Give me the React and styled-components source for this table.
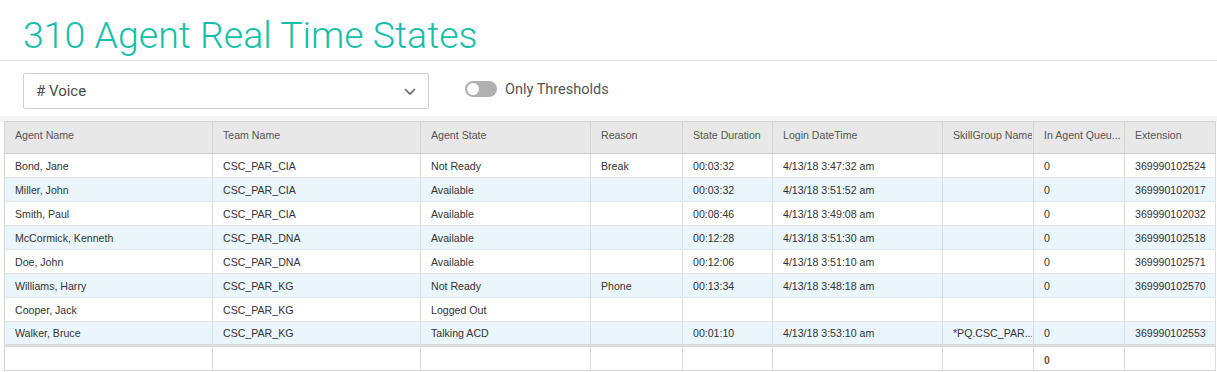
import React, { useState } from 'react';
import styled, { createGlobalStyle } from 'styled-components';

const GlobalStyle = createGlobalStyle`
  html, body { margin: 0; padding: 0; background: #fff; }
  body { font-family: "Liberation Sans", Arial, sans-serif; }
`;

const columns = [
  { key: 'name', label: 'Agent Name', width: 208 },
  { key: 'team', label: 'Team Name', width: 208 },
  { key: 'state', label: 'Agent State', width: 170 },
  { key: 'reason', label: 'Reason', width: 92 },
  { key: 'duration', label: 'State Duration', width: 90 },
  { key: 'login', label: 'Login DateTime', width: 170 },
  { key: 'skill', label: 'SkillGroup Name', width: 91 },
  { key: 'queue', label: 'In Agent Queu...', width: 91 },
  { key: 'ext', label: 'Extension', width: 91 },
];

const rows = [
  { name: 'Bond, Jane', team: 'CSC_PAR_CIA', state: 'Not Ready', reason: 'Break', duration: '00:03:32', login: '4/13/18 3:47:32 am', skill: '', queue: '0', ext: '369990102524' },
  { name: 'Miller, John', team: 'CSC_PAR_CIA', state: 'Available', reason: '', duration: '00:03:32', login: '4/13/18 3:51:52 am', skill: '', queue: '0', ext: '369990102017' },
  { name: 'Smith, Paul', team: 'CSC_PAR_CIA', state: 'Available', reason: '', duration: '00:08:46', login: '4/13/18 3:49:08 am', skill: '', queue: '0', ext: '369990102032' },
  { name: 'McCormick, Kenneth', team: 'CSC_PAR_DNA', state: 'Available', reason: '', duration: '00:12:28', login: '4/13/18 3:51:30 am', skill: '', queue: '0', ext: '369990102518' },
  { name: 'Doe, John', team: 'CSC_PAR_DNA', state: 'Available', reason: '', duration: '00:12:06', login: '4/13/18 3:51:10 am', skill: '', queue: '0', ext: '369990102571' },
  { name: 'Williams, Harry', team: 'CSC_PAR_KG', state: 'Not Ready', reason: 'Phone', duration: '00:13:34', login: '4/13/18 3:48:18 am', skill: '', queue: '0', ext: '369990102570' },
  { name: 'Cooper, Jack', team: 'CSC_PAR_KG', state: 'Logged Out', reason: '', duration: '', login: '', skill: '', queue: '', ext: '' },
  { name: 'Walker, Bruce', team: 'CSC_PAR_KG', state: 'Talking ACD', reason: '', duration: '00:01:10', login: '4/13/18 3:53:10 am', skill: '*PQ.CSC_PAR...', queue: '0', ext: '369990102553' },
];

export default function App() {
  const [onlyThresholds, setOnlyThresholds] = useState(false);

  return (
    <Page>
      <GlobalStyle />
      <Header>
        <Title>310 Agent Real Time States</Title>
      </Header>

      <Toolbar>
        <Select>
          <span># Voice</span>
          <svg width="14" height="14" viewBox="0 0 14 14">
            <path d="M2 5 L7 10 L12 5" fill="none" stroke="#666" strokeWidth="1.6" />
          </svg>
        </Select>
        <ToggleLabel onClick={() => setOnlyThresholds(!onlyThresholds)}>
          <Switch $on={onlyThresholds} />
          Only Thresholds
        </ToggleLabel>
      </Toolbar>

      <GridArea>
        <Table>
          <colgroup>
            {columns.map(c => <col key={c.key} style={{ width: c.width }} />)}
          </colgroup>
          <thead>
            <tr>
              {columns.map(c => <Th key={c.key}><Clip>{c.label}</Clip></Th>)}
            </tr>
          </thead>
          <tbody>
            {rows.map((r, i) => (
              <Row key={r.name} $alt={i % 2 === 1}>
                {columns.map(c => <Td key={c.key}><Clip>{r[c.key]}</Clip></Td>)}
              </Row>
            ))}
          </tbody>
          <tfoot>
            <tr>
              {columns.map(c => (
                <FootCell key={c.key}>{c.key === 'queue' ? '0' : ''}</FootCell>
              ))}
            </tr>
          </tfoot>
        </Table>
      </GridArea>
    </Page>
  );
}

const Page = styled.div`
  width: 1217px;
  height: 372px;
  overflow: hidden;
  background: #fff;
`;

const Header = styled.div`
  padding: 13px 23px 0;
  height: 47px;
  border-bottom: 1px solid #e4e4e4;
`;

const Title = styled.h1`
  margin: 0;
  font-family: Roboto, "Open Sans", sans-serif;
  font-weight: 300;
  font-size: 37.5px;
  line-height: 44px;
  color: #14bfa9;
`;

const Toolbar = styled.div`
  display: flex;
  align-items: center;
  gap: 36px;
  padding: 12px 23px 7px;
`;

const Select = styled.div`
  box-sizing: border-box;
  width: 406px;
  height: 36px;
  border: 1px solid #cfcfcf;
  border-radius: 2px;
  display: flex;
  align-items: center;
  justify-content: space-between;
  padding: 0 11px 0 12px;
  font-family: Roboto, "Liberation Sans", sans-serif;
  font-size: 15px;
  color: #4a4a4a;
`;

const ToggleLabel = styled.label`
  display: flex;
  align-items: center;
  gap: 8px;
  cursor: pointer;
  font-family: Roboto, "Liberation Sans", sans-serif;
  font-size: 14.5px;
  color: #555;
  margin-bottom: 4px;
`;

const Switch = styled.span`
  position: relative;
  width: 32px;
  height: 16px;
  border-radius: 8px;
  background: ${p => (p.$on ? '#14bfa9' : '#b0b0b0')};
  &::after {
    content: '';
    position: absolute;
    top: 2px;
    left: ${p => (p.$on ? '18px' : '2px')};
    width: 12px;
    height: 12px;
    border-radius: 50%;
    background: #fff;
  }
`;

const GridArea = styled.div`
  background: linear-gradient(#f4f4f4 0, #f4f4f4 6px, #fff 6px);
  padding: 5px 2px 0 4px;
`;

const Table = styled.table`
  border-collapse: collapse;
  table-layout: fixed;
  width: 1211px;
  font-family: "Liberation Sans", Arial, sans-serif;
  font-size: 10.6px;
  color: #333;
  border: 1px solid #d4d4d4;
  background: #fff;
`;

const Clip = styled.div`
  white-space: nowrap;
  overflow: hidden;
`;

const Th = styled.th`
  box-sizing: border-box;
  height: 32px;
  padding: 0 1px 6px 10px;
  text-align: left;
  font-weight: normal;
  color: #555;
  background: #e8e8e8;
  border-right: 1px solid #d4d4d4;
  border-bottom: 1px solid #cdcdcd;
`;

const Row = styled.tr`
  background: ${p => (p.$alt ? '#eaf6fb' : '#fff')};
`;

const Td = styled.td`
  box-sizing: border-box;
  height: 24px;
  padding: 0 1px 0 10px;
  border-right: 1px solid #dcdcdc;
  border-bottom: 1px solid #e4e4e4;
`;

const FootCell = styled.td`
  box-sizing: border-box;
  height: 25px;
  padding: 2px 10px 0;
  border-top: 3px solid #dcdcdc;
  border-right: 1px solid #dcdcdc;
  border-bottom: 1px solid #d4d4d4;
  font-weight: bold;
  color: #7a5520;
`;
